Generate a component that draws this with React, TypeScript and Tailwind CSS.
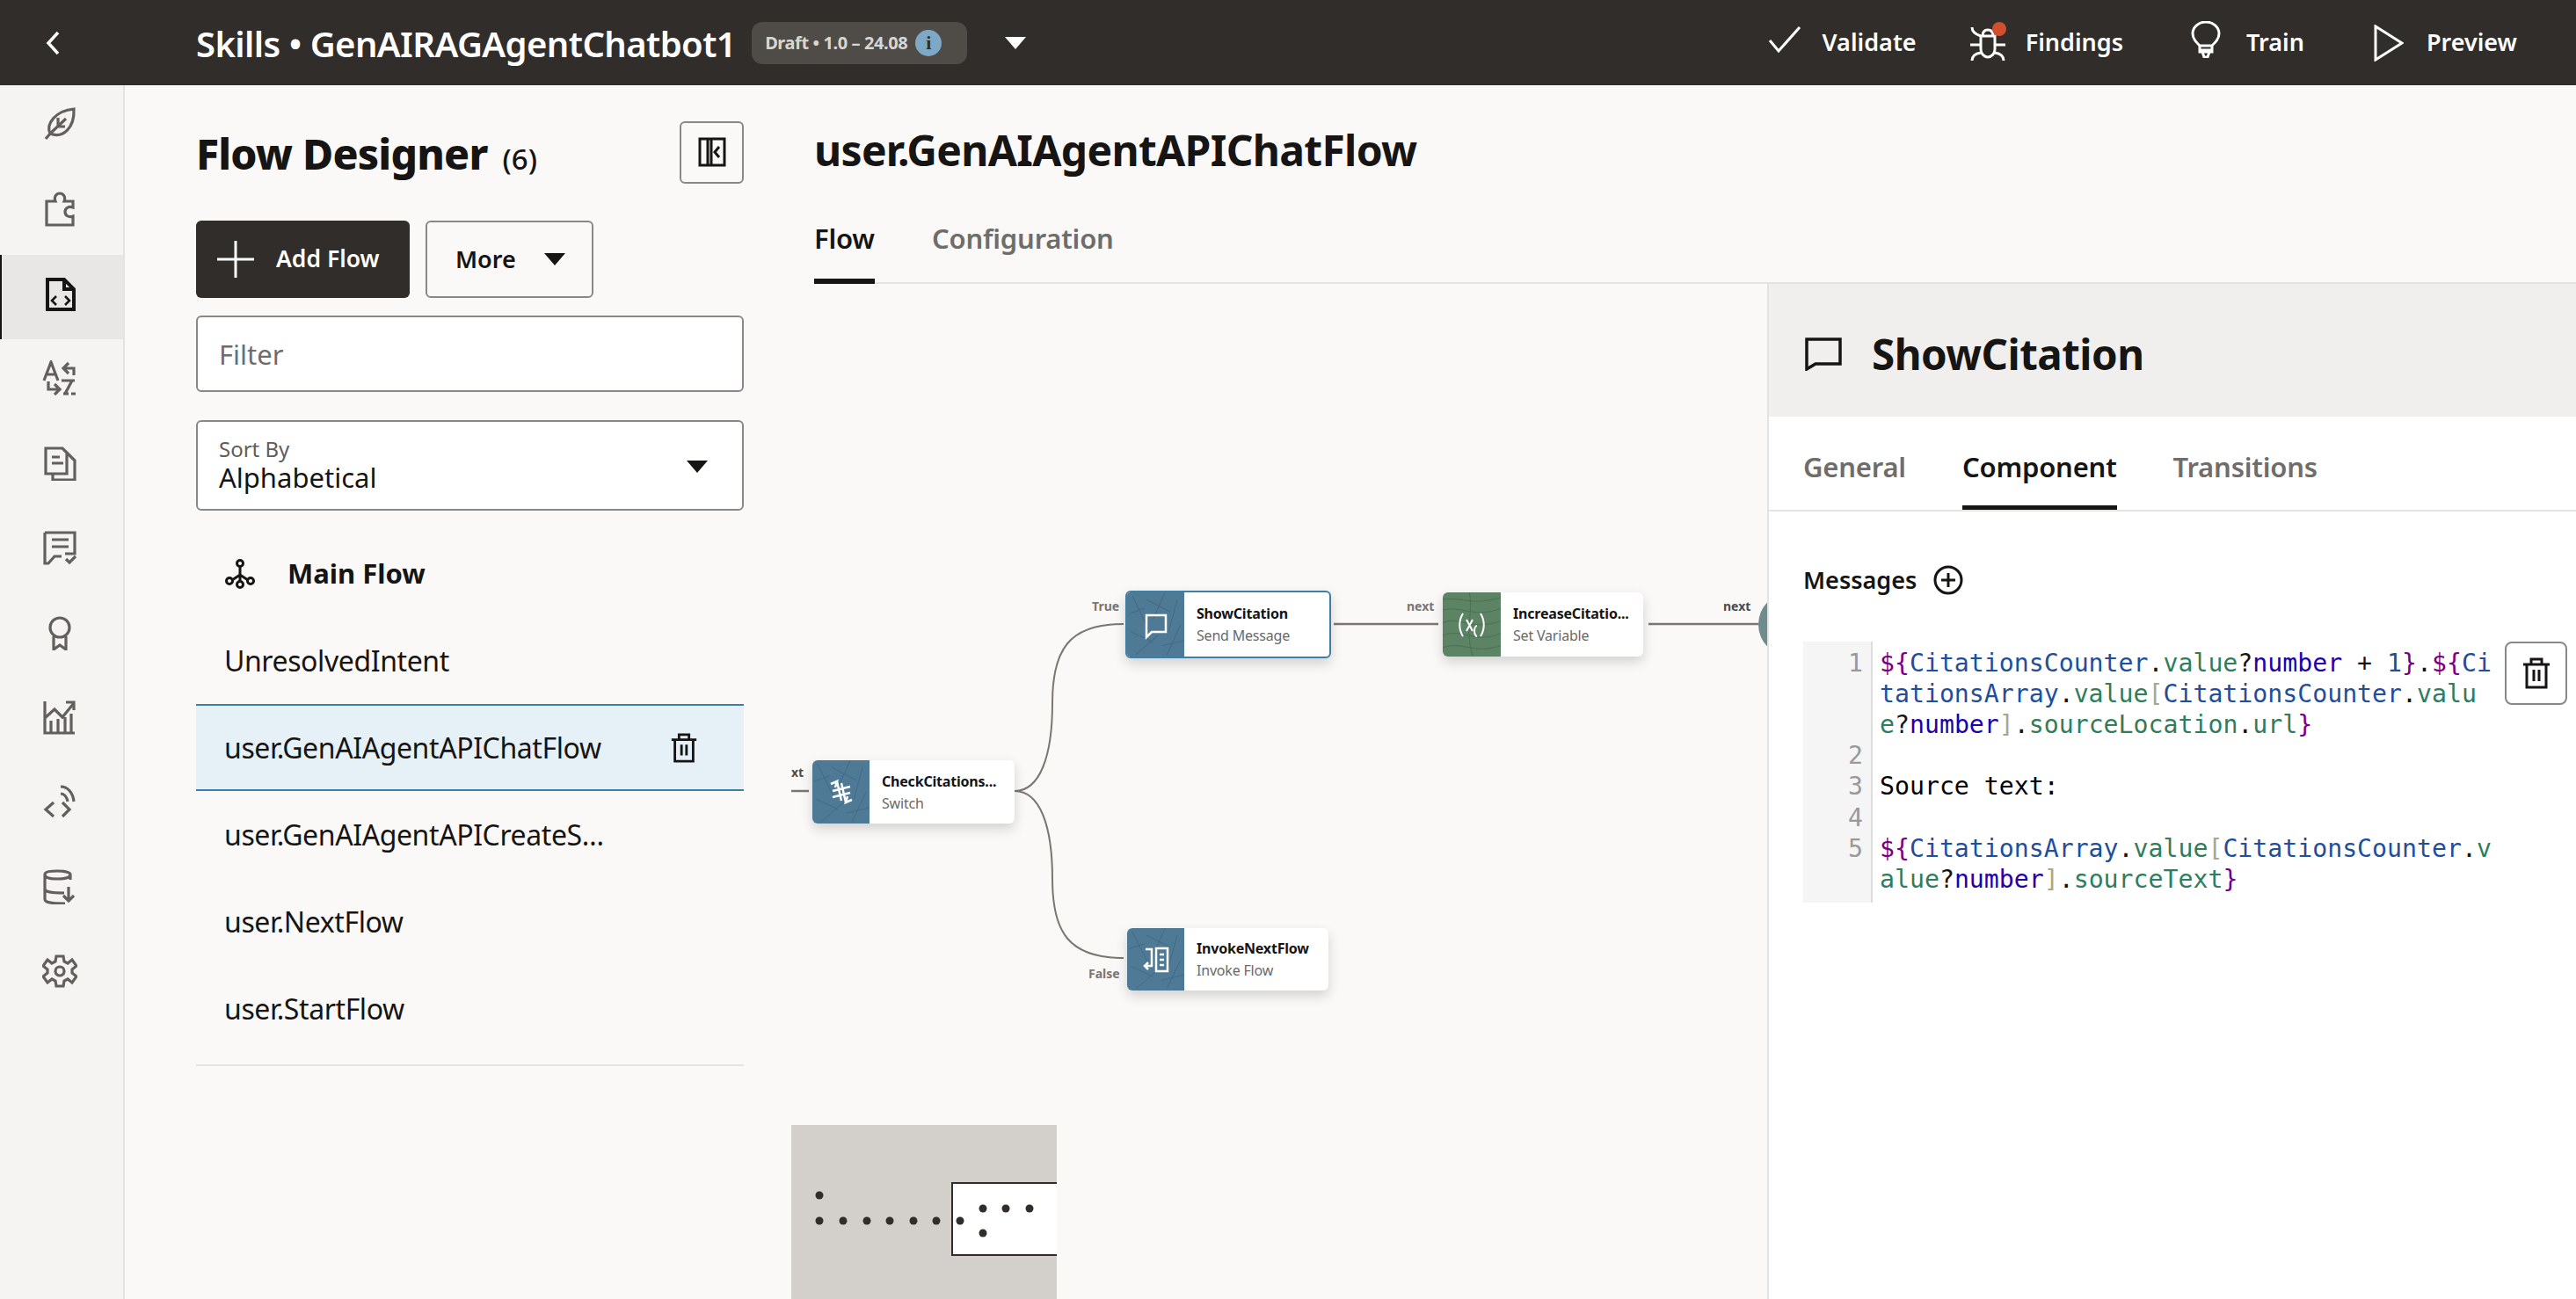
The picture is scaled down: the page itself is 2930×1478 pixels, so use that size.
const sans = "font-['Noto_Sans',sans-serif]";

function Caret({ className }: { className: string }) {
  return (
    <svg viewBox="0 0 24 14" className={className}>
      <path d="M0 0H24L12 14Z" fill="currentColor" />
    </svg>
  );
}

function TrashIcon({ className }: { className: string }) {
  return (
    <svg viewBox="0 0 32 36" className={className} fill="none" stroke="#161513" strokeWidth="3">
      <path d="M1 8H31M10 8V2H22V8M5 8V34H27V8M13 14V27M19 14V27" />
    </svg>
  );
}

const railIcons = [
  <path key="a" d="M4 37 9 31M9 31C4 20 15 5 36 3 37 24 24 37 9 31ZM9 31 27 14M17 23H26M18 22V13" />,
  <path key="b" d="M5 11H15C13 6 16 2 20 2S27 6 25 11H35V18C30 16 26 19 26 23S30 30 35 28V38H5Z" />,
  <g key="c" stroke="#161513">
    <path strokeWidth="4" d="M5 4H24L35 15V38H5ZM24 4V15H35" />
    <path strokeWidth="2.5" d="M15 23 10 28 15 33M25 23 30 28 25 33" />
  </g>,
  <path key="d" d="M2 23 10 2 18 23M5 16H15M30 3 24 9 30 15M24 9H36V17M7 24V33H19M14 27 20 33 14 39M22 23H37M26 38 34 23M24 38H30M33 38H38" />,
  <path key="e" d="M4 3H23L28 8V32H4ZM12 32V39H37V17L28 8M11 13H20M11 20H24" />,
  <path key="f" d="M3 3H37V27H26M3 3V38H7L14 30H22M11 11H30M11 19H30M27 33 31 37 38 30" />,
  <path key="g" d="M20 3A11 11 0 1 0 20 25 11 11 0 1 0 20 3ZM13 24V39L20 34 27 39V24" />,
  <path key="h" d="M3 2V38H37M3 21 14 11 23 20 36 4M27 3H36V12M10 37V24M18 37V22M26 37V20M33 37V16" />,
  <path key="i" d="M21 3C29 3 35 10 36 20M21 11C25 11 28 15 29 20M13 21 4 29 13 37M23 21 31 29 23 37" />,
  <path key="j" d="M32 12V6C32 3 24 2 17 2S3 3 3 6V34C3 38 10 39 26 39M3 6C3 10 10 11 17 11S32 10 32 6M3 22C3 26 10 27 25 27M30 20V34M24 30 30 36 36 30" />,
  <path key="k" d="M16 3H24L25 9 29 11 34 7 39 14 34 18V22L39 26 34 33 29 29 25 31 24 37H16L15 31 11 29 6 33 1 26 6 22V18L1 14 6 7 11 11 15 9ZM20 15A5 5 0 1 0 20 25 5 5 0 1 0 20 15Z" />,
];

function IconRail() {
  return (
    <nav className="w-[142px] shrink-0 border-r-2 border-[#e4e3e1] bg-[#f5f4f2]">
      {railIcons.map((icon, i) => (
        <div
          key={i}
          className={
            i === 2
              ? "flex h-[96.4px] items-center justify-center border-l-2 border-[#161513] bg-[#e8e7e5] pr-1 pb-2"
              : "flex h-[96.4px] items-center justify-center pr-1 pb-2"
          }
        >
          <svg viewBox="0 0 40 40" className="h-10 w-10" fill="none" stroke="#625f5c" strokeWidth="3.2">
            {icon}
          </svg>
        </div>
      ))}
    </nav>
  );
}

function TopBar() {
  return (
    <header className="flex h-[97px] shrink-0 items-center bg-[#312d2a] text-white">
      <svg viewBox="0 0 16 28" className="ml-[52px] h-7 w-4" fill="none" stroke="white" strokeWidth="3.5">
        <path d="M14 2 3 14 14 26" />
      </svg>
      <h1 className="mt-[2px] ml-[155px] text-[40px] leading-none font-semibold tracking-[-0.6px] whitespace-nowrap">
        Skills • GenAIRAGAgentChatbot1
      </h1>
      <div className="ml-[18px] flex h-12 w-[245px] items-center rounded-xl bg-[#4f4b47] pl-[15px]">
        <span className="text-[20px] font-bold tracking-[-0.4px] whitespace-nowrap text-[#d8d6d3]">Draft • 1.0 – 24.08</span>
        <span className="ml-[9px] flex h-[30px] w-[30px] items-center justify-center rounded-full bg-[#7ea9c6] font-['Liberation_Serif',serif] text-[22px] font-bold text-[#312d2a]">
          i
        </span>
      </div>
      <Caret className="ml-[43px] h-[14px] w-6 text-white" />
      <div className="ml-auto flex items-center pr-[67px] text-[27px] font-semibold">
        <svg viewBox="0 0 38 32" className="mr-[24px] mb-2 h-8 w-[38px]" fill="none" stroke="white" strokeWidth="3">
          <path d="M2 17 12 29 36 2" />
        </svg>
        <span>Validate</span>
        <span className="relative mr-[22px] ml-[60px] h-[42px] w-[42px]">
          <svg viewBox="0 0 42 42" className="h-[42px] w-[42px]" fill="none" stroke="white" strokeWidth="3">
            <path d="M13 13H29V28A8 9 0 0 1 13 28ZM15 13C15 8 17 6 21 6S27 8 27 13M3 3C3 8 7 11 13 13M1 23H13M29 23H41M3 41C3 36 7 33 13 32M39 41C39 36 35 33 29 32" />
          </svg>
          <span className="absolute top-[-3px] right-0 h-4 w-4 rounded-full bg-[#d14f2f]" />
        </span>
        <span>Findings</span>
        <svg viewBox="0 0 34 42" className="mr-[29px] mb-2 ml-[77px] h-[42px] w-[34px]" fill="none" stroke="white" strokeWidth="3">
          <path d="M10 28C6 24 2 20 2 14A15 13 0 0 1 32 14C32 20 28 24 24 28ZM10 28V35H24V28M10 33H24M13 35 15 41H19L21 35" />
        </svg>
        <span>Train</span>
        <svg viewBox="0 0 34 42" className="mr-[26px] ml-[79px] h-[42px] w-[34px]" fill="none" stroke="white" strokeWidth="3">
          <path d="M2 2V40L32 21Z" />
        </svg>
        <span>Preview</span>
      </div>
    </header>
  );
}

const flows = ["UnresolvedIntent", "user.GenAIAgentAPIChatFlow", "user.GenAIAgentAPICreateS…", "user.NextFlow", "user.StartFlow"];

function FlowList() {
  return (
    <aside className="w-[758px] shrink-0 pl-[81px]">
      <div className="w-[623px]">
        <div className="flex items-center justify-between pt-[33px]">
          <h2 className="flex items-baseline pt-[9px] text-[48px] leading-[71px] font-extrabold tracking-[-0.8px] text-[#161513]">
            Flow Designer
            <span className="ml-[17px] text-[33px] font-medium tracking-normal">(6)</span>
          </h2>
          <button className="flex h-[71px] w-[73px] items-center justify-center rounded-md border-2 border-[#8a8886]">
            <svg viewBox="0 0 32 34" className="h-[34px] w-8" fill="none" stroke="#161513" strokeWidth="3">
              <path d="M2 2H30V32H2ZM11 2V32M15 2V32M24 11 19 17 24 23" />
            </svg>
          </button>
        </div>
        <div className="mt-[35px] flex gap-[18px]">
          <button className="flex h-[88px] w-[243px] items-center rounded-md bg-[#312d2a] pl-6 text-[26.5px] font-semibold text-white">
            <svg viewBox="0 0 42 42" className="mr-[25px] h-[42px] w-[42px]" stroke="white" strokeWidth="3">
              <path d="M21 0V42M0 21H42" />
            </svg>
            Add Flow
          </button>
          <button className="flex h-[88px] w-[191px] items-center rounded-md border-2 border-[#8a8886] pl-8 text-[27px] font-semibold text-[#161513]">
            More
            <Caret className="ml-[32px] h-[14px] w-6 text-[#161513]" />
          </button>
        </div>
        <div className="mt-5 flex h-[87px] items-center rounded-md border-2 border-[#8a8886] bg-white pt-[2px] pl-[24px] text-[31px] text-[#6f6d6a]">
          Filter
        </div>
        <div className="relative mt-8 h-[103px] rounded-md border-2 border-[#8a8886] bg-white pt-4 pl-[24px]">
          <div className="text-[24px] leading-[30px] text-[#5f5d5a]">Sort By</div>
          <div className="text-[31px] leading-[35px] text-[#161513]">Alphabetical</div>
          <Caret className="absolute top-[44px] right-[39px] h-[14px] w-6 text-[#161513]" />
        </div>
        <div className="mt-[22px] flex h-[99px] items-center text-[31px] font-bold text-[#161513]">
          <svg viewBox="0 0 34 34" className="ml-[33px] h-[34px] w-[34px]" fill="none" stroke="#161513" strokeWidth="3">
            <circle cx="17" cy="5" r="3.5" />
            <circle cx="5" cy="25" r="3.5" />
            <circle cx="17" cy="29" r="3.5" />
            <circle cx="29" cy="25" r="3.5" />
            <path d="M17 9V25M8 24 17 18 26 24" />
          </svg>
          <span className="ml-[37px]">Main Flow</span>
        </div>
        <ul className="border-b-2 border-[#e4e3e1] pb-[14px] text-[32px] text-[#161513]">
          {flows.map((f, i) => (
            <li
              key={f}
              className={
                i === 1
                  ? "flex h-[99px] items-center justify-between border-y-2 border-[#3f7fa6] bg-[#e5f0f7] pr-[52px] pl-[32px]"
                  : "flex h-[99px] items-center pl-[32px]"
              }
            >
              <span className="tracking-[-0.4px] whitespace-nowrap">{f}</span>
              {i === 1 && <TrashIcon className="h-[34px] w-[32px]" />}
            </li>
          ))}
        </ul>
      </div>
    </aside>
  );
}

function Texture({ green }: { green?: boolean }) {
  return (
    <svg viewBox="0 0 66 72" preserveAspectRatio="none" className="absolute inset-0 h-full w-full" fill="none" stroke={green ? "#4c7255" : "#436a84"} strokeWidth="1">
      {green ? (
        <path d="M0 8C20 4 30 16 66 6M0 20C22 14 34 30 66 18M0 34C20 26 30 44 66 32M0 48C24 40 36 58 66 46M0 62C22 54 34 70 66 60M30 0C36 20 24 40 34 72" />
      ) : (
        <path d="M6 4 24 40M44 0 30 30M58 8 48 44M4 44 30 56M10 70 36 48M62 36 46 70M22 8 50 22M2 24 20 18M40 60 66 54" />
      )}
    </svg>
  );
}

function FlowNode({
  box,
  block,
  title,
  sub,
  green,
  children,
}: {
  box: string;
  block: string;
  title: string;
  sub: string;
  green?: boolean;
  children: React.ReactNode;
}) {
  return (
    <div className={`absolute flex overflow-hidden rounded-md bg-white shadow-[0_6px_14px_rgba(0,0,0,0.16)] ${box}`}>
      <div className={`relative flex shrink-0 items-center justify-center ${block}`}>
        <Texture green={green} />
        <svg viewBox="0 0 34 34" className="relative h-[34px] w-[34px]" fill="none" stroke="white" strokeWidth="2.5">
          {children}
        </svg>
      </div>
      <div className="flex flex-col justify-center gap-[1px] pl-[14px]">
        <span className="text-[16px] leading-[24px] font-bold tracking-[-0.2px] whitespace-nowrap text-[#161513]">{title}</span>
        <span className="text-[16px] leading-[24px] tracking-[-0.2px] whitespace-nowrap text-[#6b6966]">{sub}</span>
      </div>
    </div>
  );
}

function Canvas() {
  return (
    <div className="relative min-w-0 flex-1 overflow-hidden">
      <svg className="absolute inset-0 h-full w-full" fill="none" stroke="#7a7672" strokeWidth="2.5">
        <path d="M0 577H20M617 387H736M975 387H1100" />
        <path strokeWidth="2" d="M254 577C283 577 297 537 297 477 297 417 315 387 378 387M254 577C283 577 297 617 297 677 297 737 315 767 378 767" />
      </svg>
      <span className="absolute top-[356px] left-[342px] text-[14px] font-bold text-[#7a7672]">True</span>
      <span className="absolute top-[356px] left-[700px] text-[14px] font-bold text-[#7a7672]">next</span>
      <span className="absolute top-[356px] left-[1060px] text-[14px] font-bold text-[#4f4c49]">next</span>
      <span className="absolute top-[545px] left-0 text-[14px] font-bold text-[#4f4c49]">xt</span>
      <span className="absolute top-[774px] left-[338px] text-[14px] font-bold text-[#7a7672]">False</span>

      <FlowNode box="top-[542px] left-[24px] h-[72px] w-[230px]" block="w-[65px] bg-[#4f7a96]" title="CheckCitations..." sub="Switch">
        <path d="M5 8 12 5 10 12M12 5 17 27M29 26 22 29 24 22M22 29 17 7M7 16 27 11M7 23 27 18" />
      </FlowNode>
      <FlowNode box="top-[349px] left-[380px] h-[77px] w-[234px] border-2 border-[#3f7fa6]" block="w-[65px] bg-[#4f7a96]" title="ShowCitation" sub="Send Message">
        <path d="M6 6H28V25H12L6 31Z" />
      </FlowNode>
      <FlowNode box="top-[351px] left-[741px] h-[73px] w-[228px]" block="w-[66px] bg-[#5c8364]" green title="IncreaseCitatio..." sub="Set Variable">
        <path strokeWidth="2" d="M7 4C2 12 2 22 7 30M27 4C32 12 32 22 27 30M11 11 18 24M18 11 11 24M23 18A3 6 0 1 0 23.1 30" />
      </FlowNode>
      <FlowNode box="top-[733px] left-[382px] h-[71px] w-[229px]" block="w-[65px] bg-[#4f7a96]" title="InvokeNextFlow" sub="Invoke Flow">
        <path d="M5 5H12V24H4M8 20 4 24 8 28M17 4H30V30H17ZM21 11H26M21 17H26M21 23H26" />
      </FlowNode>
      <div className="absolute top-[351px] left-[1100px] h-[73px] w-[73px] rounded-full bg-[#6f8c8c]" />

      <div className="absolute bottom-0 left-0 h-[198px] w-[302px] bg-[#d3d0cb]">
        <div className="absolute top-[65px] left-[182px] h-[84px] w-[120px] border-y-2 border-l-2 border-[#312d2a] bg-white" />
        <svg className="absolute inset-0 h-full w-full" fill="#312d2a" stroke="none">
          {[32, 59, 86, 112, 139, 165, 192].map((x) => (
            <circle key={x} cx={x} cy="109" r="4.5" />
          ))}
          <circle cx="32" cy="80" r="4.5" />
          <circle cx="218" cy="95" r="4.5" />
          <circle cx="244" cy="95" r="4.5" />
          <circle cx="271" cy="95" r="4.5" />
          <circle cx="218" cy="123" r="4.5" />
        </svg>
      </div>
    </div>
  );
}

const T = {
  p: "text-[#770088]",
  v: "text-[#1f4e9b]",
  g: "text-[#2f7d5b]",
  k: "text-[#2200aa]",
  b: "text-[#a8a888]",
  d: "text-[#161513]",
};

type Tok = [string, string];

const codeLines: { n: number; rows: Tok[][] }[] = [
  {
    n: 1,
    rows: [
      [
        ["${", T.p],
        ["CitationsCounter", T.v],
        [".", T.d],
        ["value", T.g],
        ["?", T.d],
        ["number", T.k],
        [" + ", T.d],
        ["1", T.v],
        ["}", T.p],
        [".", T.d],
        ["${", T.p],
        ["Ci", T.v],
      ],
      [
        ["tationsArray", T.v],
        [".", T.d],
        ["value", T.g],
        ["[", T.b],
        ["CitationsCounter", T.v],
        [".", T.d],
        ["valu", T.g],
      ],
      [
        ["e", T.g],
        ["?", T.d],
        ["number", T.k],
        ["]", T.b],
        [".", T.d],
        ["sourceLocation", T.g],
        [".", T.d],
        ["url", T.g],
        ["}", T.p],
      ],
    ],
  },
  { n: 2, rows: [[[" ", T.d]]] },
  { n: 3, rows: [[["Source text:", "text-black"]]] },
  { n: 4, rows: [[[" ", T.d]]] },
  {
    n: 5,
    rows: [
      [
        ["${", T.p],
        ["CitationsArray", T.v],
        [".", T.d],
        ["value", T.g],
        ["[", T.b],
        ["CitationsCounter", T.v],
        [".", T.d],
        ["v", T.g],
      ],
      [
        ["alue", T.g],
        ["?", T.d],
        ["number", T.k],
        ["]", T.b],
        [".", T.d],
        ["sourceText", T.g],
        ["}", T.p],
      ],
    ],
  },
];

function CodeEditor() {
  return (
    <div className="relative mt-[49px] ml-[39px] font-['DejaVu_Sans_Mono',monospace] text-[28.2px] leading-[35.2px] whitespace-pre">
      <div className="h-[7px] w-[79px] border-r-2 border-[#dddddd] bg-[#f5f5f5]" />
      {codeLines.map((line) => (
        <div key={line.n} className="flex">
          <div className="w-[79px] shrink-0 border-r-2 border-[#dddddd] bg-[#f5f5f5] pr-[9px] text-right text-[#999999]">{line.n}</div>
          <div className="pl-2">
            {line.rows.map((row, i) => (
              <div key={i}>
                {row.map(([text, color], j) => (
                  <span key={j} className={color}>
                    {text}
                  </span>
                ))}
              </div>
            ))}
          </div>
        </div>
      ))}
      <div className="h-[9px] w-[79px] border-r-2 border-[#dddddd] bg-[#f5f5f5]" />
      <button className="absolute top-0 right-[10px] flex h-[72px] w-[71px] items-center justify-center rounded-lg border-2 border-[#8a8886] bg-white">
        <TrashIcon className="h-[36px] w-[32px]" />
      </button>
    </div>
  );
}

function DetailPanel() {
  return (
    <section className="w-[920px] shrink-0 border-l-2 border-[#e4e3e1] bg-white">
      <div className="flex h-[151px] items-center bg-[#f1efed] pt-2 pl-[41px]">
        <svg viewBox="0 0 42 38" className="h-[38px] w-[42px]" fill="none" stroke="#161513" strokeWidth="3.5">
          <path d="M2 2H40V30H12L2 36Z" />
        </svg>
        <h3 className="ml-[34px] text-[47.5px] font-bold tracking-[-0.5px] text-[#161513]">ShowCitation</h3>
      </div>
      <div className="flex h-[108px] gap-[64px] border-b-2 border-[#e4e3e1] pl-[39px] text-[31px] font-semibold tracking-[-0.2px]">
        <span className="pt-[34px] text-[#6f6d6a]">General</span>
        <span className="border-b-[5px] border-[#161513] pt-[34px] text-[#161513]">Component</span>
        <span className="pt-[34px] text-[#6f6d6a]">Transitions</span>
      </div>
      <div className="mt-[58px] ml-[39px] flex items-center text-[27px] font-semibold text-[#161513]">
        Messages
        <svg viewBox="0 0 34 34" className="ml-[19px] h-[34px] w-[34px]" fill="none" stroke="#161513" strokeWidth="3">
          <circle cx="17" cy="17" r="15" />
          <path d="M17 9V25M9 17H25" />
        </svg>
      </div>
      <CodeEditor />
    </section>
  );
}

export default function App() {
  return (
    <div className={`flex h-screen w-full flex-col overflow-hidden bg-[#fbf9f8] ${sans}`}>
      <TopBar />
      <div className="flex min-h-0 flex-1">
        <IconRail />
        <FlowList />
        <main className="flex min-w-0 flex-1 flex-col">
          <div className="h-[226px] shrink-0 pl-[26px]">
            <h2 className="pt-[40px] text-[48px] leading-[68px] font-bold tracking-[-0.7px] text-[#161513]">user.GenAIAgentAPIChatFlow</h2>
            <div className="mt-[43px] flex h-[75px] gap-[65px] border-b-2 border-[#e4e3e1] text-[31px] font-semibold tracking-[-0.2px]">
              <span className="h-[75px] border-b-[6px] border-[#161513] text-[#161513]">Flow</span>
              <span className="text-[#6f6d6a]">Configuration</span>
            </div>
          </div>
          <div className="flex min-h-0 flex-1">
            <Canvas />
            <DetailPanel />
          </div>
        </main>
      </div>
    </div>
  );
}
